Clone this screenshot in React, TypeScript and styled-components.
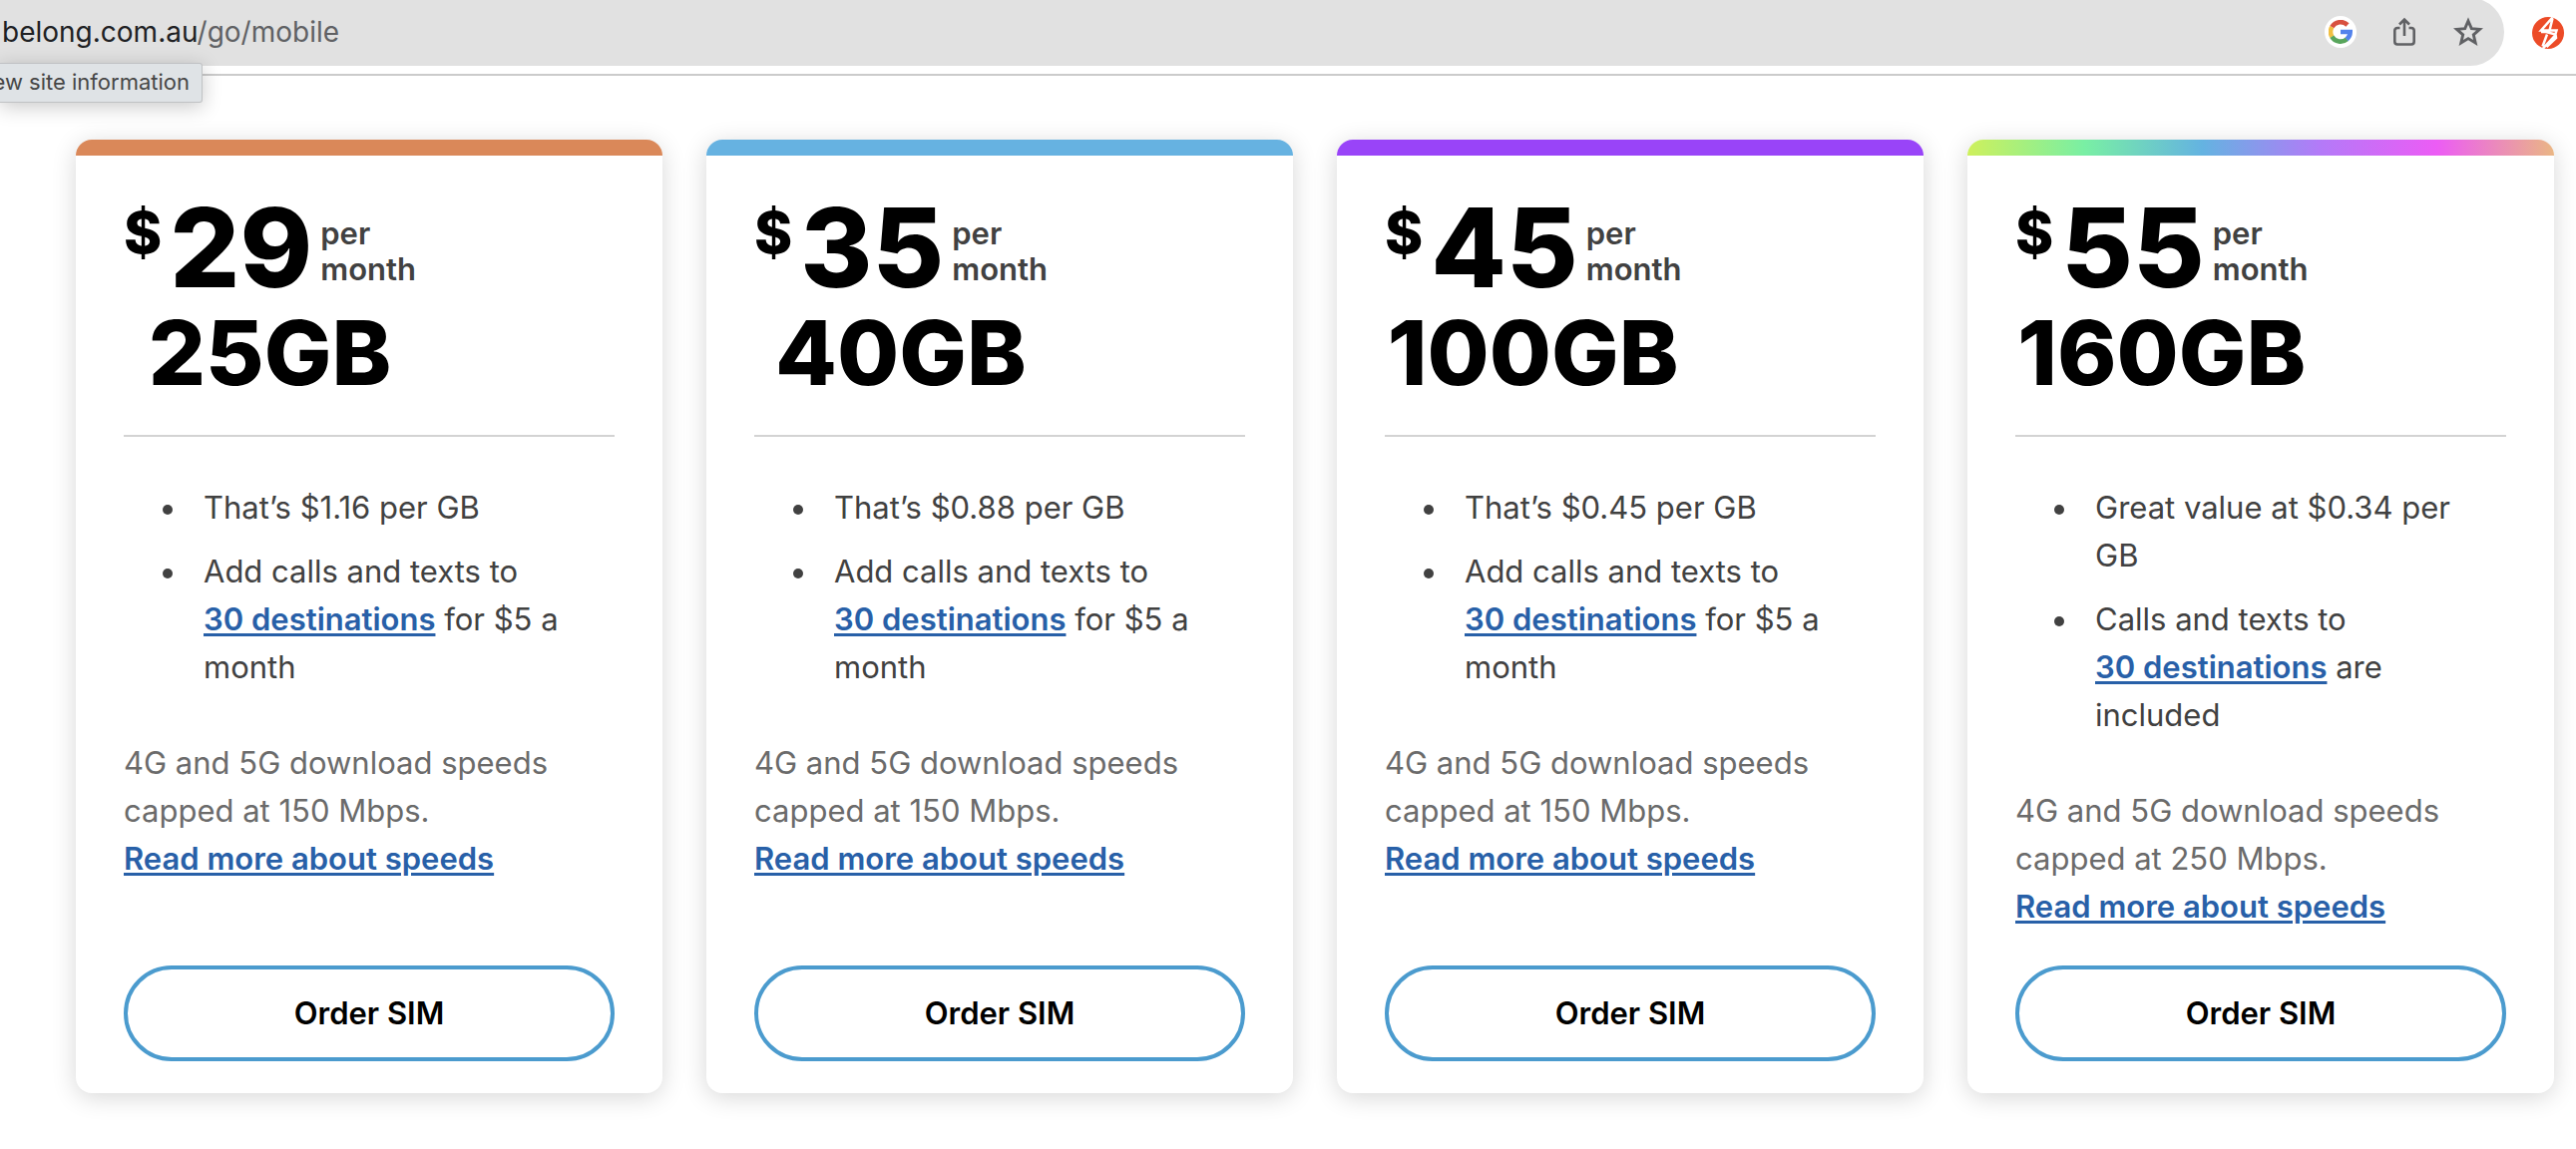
import React from 'react';
import styled, { createGlobalStyle } from 'styled-components';

const GlobalStyle = createGlobalStyle`
  * { box-sizing: border-box; }
  html { background: #ffffff; overflow-x: hidden; }
  body {
    margin: 0;
    background: #ffffff;
    color: #414141;
    font-family: Inter, Roboto, sans-serif;
    font-size: 31px;
    line-height: 48px;
  }
`;

const Page = styled.div`
  overflow: hidden;
`;

const Toolbar = styled.header`
  position: relative;
  display: flex;
  align-items: center;
  justify-content: space-between;
  height: 76px;
  padding: 0 12px 8px 0;
  border-bottom: 2px solid #cbcbcb;
`;

const AddressBar = styled.div`
  display: flex;
  flex: 1;
  align-items: center;
  justify-content: space-between;
  height: 68px;
  margin: -2px 28px 0 0;
  padding: 0 20px 0 2px;
  border-radius: 0 34px 34px 0;
  background: #e1e1e1;
`;

const Url = styled.span`
  font-size: 28px;
  line-height: 32px;
  color: #202124;
  white-space: nowrap;
`;

const UrlPath = styled.span`
  color: #606164;
`;

const Actions = styled.div`
  display: flex;
  gap: 32px;
`;

const IconButton = styled.button<{ $fill?: string }>`
  display: flex;
  align-items: center;
  justify-content: center;
  width: 32px;
  height: 32px;
  margin: 0;
  padding: 0;
  border: 0;
  border-radius: 50%;
  background: ${({ $fill }) => $fill || 'transparent'};
`;

const Tooltip = styled.div`
  position: absolute;
  top: 63px;
  left: 0;
  z-index: 1;
  display: flex;
  justify-content: flex-end;
  width: 203px;
  height: 40px;
  padding-right: 12px;
  border: 1px solid #c0c2c4;
  border-left: 0;
  border-radius: 0 3px 3px 0;
  background: #dfe3e6;
  box-shadow: 0 4px 20px rgba(0, 0, 0, 0.22);
  color: #474747;
  font-size: 22px;
  line-height: 36px;
  white-space: nowrap;
`;

const Plans = styled.main`
  display: grid;
  grid-template-columns: repeat(4, minmax(0, 1fr));
  gap: 44px;
  padding: 64px 22px 56px 76px;
`;

const Card = styled.article`
  display: flex;
  flex-direction: column;
  overflow: hidden;
  padding-bottom: 32px;
  border-radius: 16px;
  background: #ffffff;
  box-shadow: 0 4px 24px rgba(0, 0, 0, 0.16);
`;

const Stripe = styled.div<{ $paint: string }>`
  height: 16px;
  background: ${({ $paint }) => $paint};
`;

const CardBody = styled.div`
  display: flex;
  flex: 1;
  flex-direction: column;
  padding: 40px 48px 0;
`;

const Heading = styled.h2`
  display: flex;
  flex-direction: column;
  align-items: center;
  align-self: flex-start;
  margin: 0 0 28px;
  color: #000000;
  font-weight: 800;
`;

const Price = styled.span`
  display: flex;
  align-items: flex-start;
`;

const Currency = styled.span`
  margin-right: 8px;
  font-size: 58px;
  line-height: 74px;
`;

const Amount = styled.span`
  font-size: 110px;
  line-height: 104px;
`;

const Period = styled.span`
  display: flex;
  flex-direction: column;
  margin: 20px 0 0 8px;
  color: #414141;
  font-size: 31px;
  font-weight: 600;
  line-height: 36px;
`;

const Data = styled.span`
  font-size: 90px;
  line-height: 108px;
`;

const Rule = styled.hr`
  width: 100%;
  margin: 0;
  border: 0;
  border-top: 2px solid #d3d3d3;
`;

const Features = styled.ul`
  display: flex;
  flex-direction: column;
  gap: 16px;
  margin: 47px 0 48px;
  padding: 0 12px 0 80px;
  list-style: none;
`;

const Feature = styled.li`
  position: relative;

  &::before {
    content: '';
    position: absolute;
    top: 21px;
    left: -41px;
    width: 10px;
    height: 10px;
    border-radius: 50%;
    background: #414141;
  }
`;

const TextLink = styled.a`
  color: #2860a8;
  font-weight: 600;
  text-decoration: underline;
  text-decoration-thickness: 3px;
  text-underline-offset: 3px;
  white-space: nowrap;
`;

const Speeds = styled.p`
  margin: 0 0 35px;
  color: #6b6b6b;
`;

const OrderButton = styled.button`
  width: 100%;
  height: 96px;
  margin-top: auto;
  border: 4px solid #4b9bce;
  border-radius: 48px;
  background: #ffffff;
  color: #000000;
  font-family: inherit;
  font-size: 31px;
  font-weight: 600;
  line-height: 48px;
`;

type Plan = {
  price: string;
  data: string;
  value: string;
  before: string;
  after: string;
  cap: string;
  paint: string;
};

const PLANS: Plan[] = [
  { price: '29', data: '25GB', value: 'That’s $1.16 per GB', before: 'Add calls and texts to', after: 'for $5 a month', cap: '150', paint: '#da8859' },
  { price: '35', data: '40GB', value: 'That’s $0.88 per GB', before: 'Add calls and texts to', after: 'for $5 a month', cap: '150', paint: '#66b2e1' },
  { price: '45', data: '100GB', value: 'That’s $0.45 per GB', before: 'Add calls and texts to', after: 'for $5 a month', cap: '150', paint: '#9944f8' },
  {
    price: '55',
    data: '160GB',
    value: 'Great value at $0.34 per GB',
    before: 'Calls and texts to',
    after: 'are included',
    cap: '250',
    paint: 'linear-gradient(90deg, #cef05c 0%, #79efa4 20%, #64b3e1 40%, #b37af8 60%, #ec5cf5 80%, #eab684 100%)',
  },
];

const GoogleIcon = () => (
  <svg width="24" height="24" viewBox="0 0 24 24" fill="none" strokeWidth="4.6" aria-hidden="true">
    <path d="M3.3 7.2A10 10 0 0 1 19 5" stroke="#d85140" />
    <path d="M3.3 7.2A10 10 0 0 0 3.3 16.8" stroke="#f1bf42" />
    <path d="M3.3 16.8A10 10 0 0 0 18.4 19.2" stroke="#58a55c" />
    <path d="M12 12H21.7A10 10 0 0 1 18.2 19.4" stroke="#5383ec" />
  </svg>
);

const ShareIcon = () => (
  <svg width="24" height="30" viewBox="0 0 24 30" fill="none" stroke="#606164" strokeWidth="2.6" aria-hidden="true">
    <path d="M7.5 11H5a2.7 2.7 0 0 0-2.7 2.7v11.1A2.7 2.7 0 0 0 5 27.5h14a2.7 2.7 0 0 0 2.7-2.7V13.7A2.7 2.7 0 0 0 19 11h-2.5" />
    <path d="M12 19V3M7 7.5L12 2.5l5 5" />
  </svg>
);

const StarIcon = () => (
  <svg width="32" height="32" viewBox="0 0 32 32" fill="none" stroke="#606164" strokeWidth="2.9" aria-hidden="true">
    <path d="M16 5L19.3 12.6L27.5 13.4L21.3 18.8L23.2 26.9L16 22.6L8.8 26.9L10.7 18.8L4.5 13.4L12.7 12.6Z" />
  </svg>
);

const ExtensionIcon = () => (
  <svg width="32" height="32" viewBox="0 0 32 32" aria-hidden="true">
    <circle cx="16" cy="16" r="16" fill="#ec4b27" />
    <path
      d="M20.5 0.5L9 13.5H24.5L23 18.5L11 31.5M20.5 1.5L17.5 13.5M9 15H14L23.5 17.5L24 21L14.5 30M15 17.5L10.5 29.5"
      fill="none"
      stroke="#ffffff"
      strokeWidth="2.5"
    />
  </svg>
);

const PlanCard = ({ plan }: { plan: Plan }) => (
  <Card>
    <Stripe $paint={plan.paint} />
    <CardBody>
      <Heading>
        <Price>
          <Currency>$</Currency>
          <Amount>{plan.price}</Amount>
          <Period>
            <span>per</span>
            <span>month</span>
          </Period>
        </Price>
        <Data>{plan.data}</Data>
      </Heading>
      <Rule />
      <Features>
        <Feature>{plan.value}</Feature>
        <Feature>
          {plan.before} <TextLink href="#destinations">30 destinations</TextLink> {plan.after}
        </Feature>
      </Features>
      <Speeds>
        4G and 5G download speeds capped at {plan.cap} Mbps.{' '}
        <TextLink href="#speeds">Read more about speeds</TextLink>
      </Speeds>
      <OrderButton type="button">Order SIM</OrderButton>
    </CardBody>
  </Card>
);

export default function App() {
  return (
    <Page>
      <GlobalStyle />
      <Toolbar>
        <AddressBar>
          <Url>
            belong.com.au<UrlPath>/go/mobile</UrlPath>
          </Url>
          <Actions>
            <IconButton type="button" aria-label="Search with Google" $fill="#ffffff"><GoogleIcon /></IconButton>
            <IconButton type="button" aria-label="Share this page"><ShareIcon /></IconButton>
            <IconButton type="button" aria-label="Bookmark this page"><StarIcon /></IconButton>
          </Actions>
        </AddressBar>
        <IconButton type="button" aria-label="Extension"><ExtensionIcon /></IconButton>
        <Tooltip role="tooltip">View site information</Tooltip>
      </Toolbar>
      <Plans>
        {PLANS.map((plan) => (
          <PlanCard key={plan.price} plan={plan} />
        ))}
      </Plans>
    </Page>
  );
}
